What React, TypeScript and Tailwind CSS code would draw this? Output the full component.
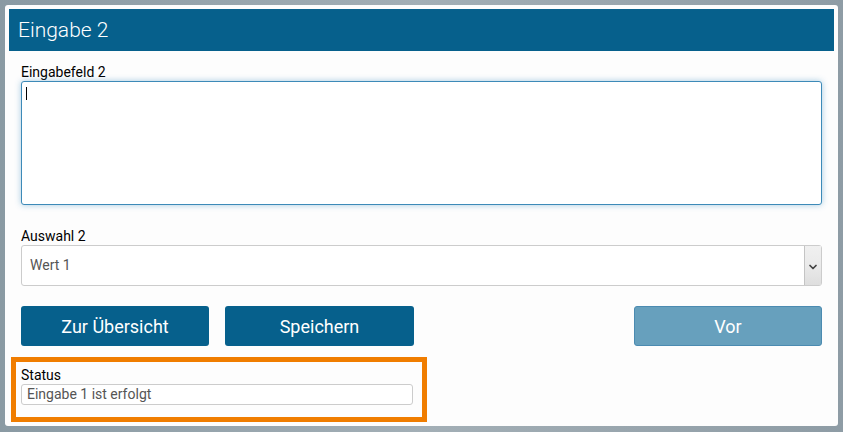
import { ChevronDown } from 'lucide-react';

function Field({ label, children }: { label: string; children: React.ReactNode }) {
  return (
    <div className="flex flex-col">
      <label className="text-[14px] leading-[16px] text-black mb-px">{label}</label>
      {children}
    </div>
  );
}

export default function App() {
  return (
    <div
      className="w-[843px] h-[432px] p-[5px] bg-gradient-to-r from-[#8a9aa3] via-[#a3afb6] to-[#8e9ca5]"
      style={{ fontFamily: 'Roboto, "Liberation Sans", sans-serif' }}
    >
      <div className="h-[421px] w-[833px] bg-[#fdfdfd] rounded-[3px] p-[4px] flex flex-col">
        {/* Header */}
        <div className="h-[42px] bg-[#06608c] flex items-center px-[9px]">
          <h1 className="text-white text-[21px] font-light leading-none">Eingabe 2</h1>
        </div>

        <div className="px-[12px] pt-[13px] flex flex-col">
          <Field label="Eingabefeld 2">
            <div className="h-[124px] bg-white border border-[#3d8ab8] rounded-[3px] shadow-[0_0_6px_rgba(60,140,190,0.45)] px-[4px] pt-[5px]">
              <div className="w-px h-[13px] bg-black" />
            </div>
          </Field>

          <div className="mt-[23px]">
            <Field label="Auswahl 2">
              <div className="h-[41px] bg-white border border-[#cccccc] rounded-[3px] flex items-stretch">
                <div className="flex-1 flex items-center pl-[8px] text-[14px] text-[#555]">Wert 1</div>
                <div className="w-[17px] border-l border-[#c4c4c4] bg-gradient-to-b from-[#f0f0f0] via-[#eaeaea] to-[#dedede] flex items-center justify-center pt-[2px]">
                  <ChevronDown size={12} strokeWidth={3.5} className="text-[#444]" />
                </div>
              </div>
            </Field>
          </div>

          <div className="mt-[20px] flex items-center">
            <button className="w-[188px] h-[40px] bg-[#06608c] rounded-[3px] text-white text-[18px]">
              Zur Übersicht
            </button>
            <button className="ml-[16px] w-[189px] h-[40px] bg-[#06608c] rounded-[3px] text-white text-[18px]">
              Speichern
            </button>
            <button className="ml-auto w-[188px] h-[40px] bg-[#67a0bd] border border-[#4b8bb1] rounded-[3px] text-white text-[18px]">
              Vor
            </button>
          </div>
        </div>

        <div className="mt-[11px] ml-[2px] w-[416px] h-[65px] border-[5px] border-[#f07d00] pl-[5px] pr-[9px] pt-[5px]">
          <Field label="Status">
            <div className="h-[21px] bg-white border border-[#cccccc] rounded-[3px] flex items-center px-[5px] text-[14px] text-[#555]">
              Eingabe 1 ist erfolgt
            </div>
          </Field>
        </div>
      </div>
    </div>
  );
}
